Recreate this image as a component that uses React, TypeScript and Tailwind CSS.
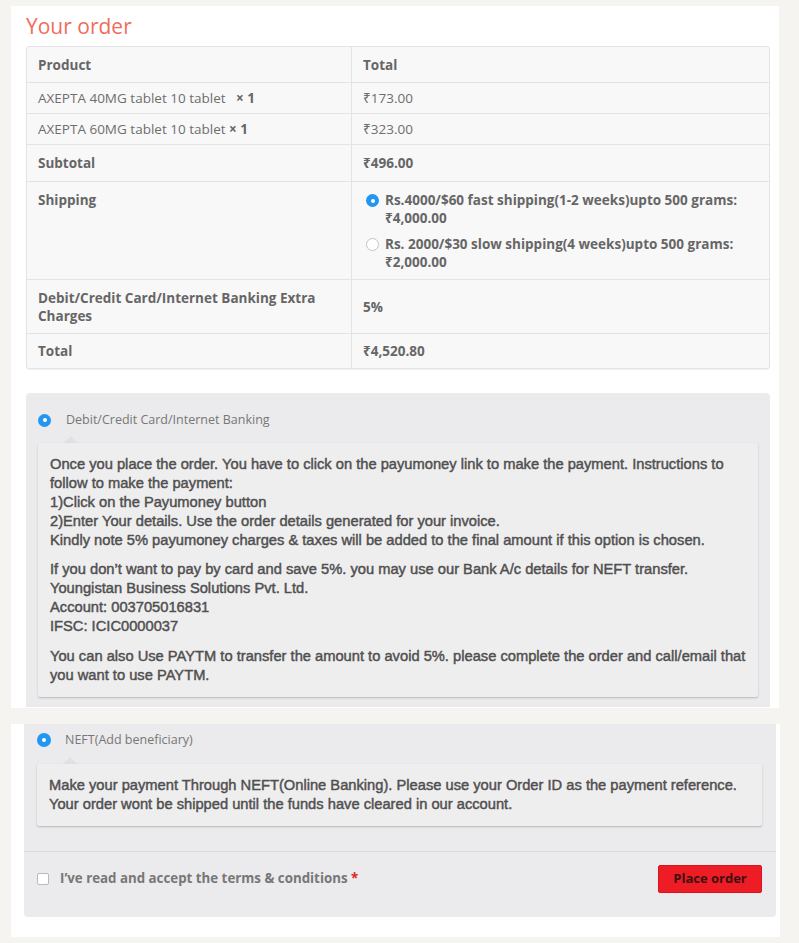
import React from "react";

const os = "font-['Open_Sans','Noto_Sans',sans-serif]";
const ls = "font-['Liberation_Sans',Arial,sans-serif]";

function Radio({ checked, size = 13 }: { checked?: boolean; size?: number }) {
  return checked ? (
    <span
      className="flex shrink-0 items-center justify-center rounded-full bg-[#2196f3]"
      style={{ width: size, height: size }}
    >
      <span className="block h-[4px] w-[4px] rounded-full bg-white" />
    </span>
  ) : (
    <span
      className="block shrink-0 rounded-full border border-[#c4c4c4] bg-white"
      style={{ width: size, height: size }}
    />
  );
}

function Row({
  h,
  left,
  right,
  first,
}: {
  h: string;
  left: React.ReactNode;
  right: React.ReactNode;
  first?: boolean;
}) {
  return (
    <div className={`grid grid-cols-[324px_1fr] ${h} ${first ? "" : "border-t border-[#e4e4e4]"}`}>
      <div className="flex items-center px-[11px]">{left}</div>
      <div className="flex items-center border-l border-[#e4e4e4] px-[11px]">{right}</div>
    </div>
  );
}

export default function App() {
  return (
    <div className={`h-[943px] w-[799px] overflow-hidden bg-[#f5f4f0] pt-[6px] ${os}`}>
      {/* Card 1 */}
      <div className="ml-[11px] h-[702px] w-[768px] overflow-hidden bg-white pl-[15px] pr-[9px]">
        <h2 className="pt-[6px] pb-[6px] text-[21px] leading-[28px] font-normal text-[#f26b5b]">Your order</h2>
        <div className="overflow-hidden rounded-[3px] border border-[#e4e4e4] bg-[#f8f8f8] text-[13.5px] leading-[18px] text-[#6e6e6e] shadow-[0_1px_1px_rgba(0,0,0,0.06)]">
          <Row first h="h-[35px]" left={<b className="text-[#666]">Product</b>} right={<b className="text-[#666]">Total</b>} />
          <Row
            h="h-[31px]"
            left={
              <span>
                AXEPTA 40MG tablet 10 tablet&nbsp;&nbsp; <b className="text-[#666]">×&nbsp;1</b>
              </span>
            }
            right={<span>₹173.00</span>}
          />
          <Row
            h="h-[31px]"
            left={
              <span>
                AXEPTA 60MG tablet 10 tablet <b className="text-[#666]">×&nbsp;1</b>
              </span>
            }
            right={<span>₹323.00</span>}
          />
          <Row h="h-[37px]" left={<b className="text-[#666]">Subtotal</b>} right={<b className="text-[#666]">₹496.00</b>} />
          <div className="grid h-[98px] grid-cols-[324px_1fr] border-t border-[#e4e4e4]">
            <div className="px-[11px] pt-[9px]">
              <b className="text-[#666]">Shipping</b>
            </div>
            <div className="flex flex-col gap-[8px] border-l border-[#e4e4e4] pt-[9px] pl-[14px] pr-[12px] font-bold text-[#666]">
              <div className="flex gap-[6px]">
                <span className="mt-[3px] flex">
                  <Radio checked />
                </span>
                <span>
                  Rs.4000/$60 fast shipping(1-2 weeks)upto 500 grams:
                  <br />
                  ₹4,000.00
                </span>
              </div>
              <div className="flex gap-[6px]">
                <span className="mt-[3px] flex">
                  <Radio />
                </span>
                <span>
                  Rs. 2000/$30 slow shipping(4 weeks)upto 500 grams:
                  <br />
                  ₹2,000.00
                </span>
              </div>
            </div>
          </div>
          <div className="grid h-[54px] grid-cols-[324px_1fr] border-t border-[#e4e4e4]">
            <div className="flex items-center px-[11px]">
              <b className="text-[#666]">
                Debit/Credit Card/Internet Banking Extra
                <br />
                Charges
              </b>
            </div>
            <div className="flex items-center border-l border-[#e4e4e4] px-[11px]">
              <b className="text-[#666]">5%</b>
            </div>
          </div>
          <Row h="h-[35px]" left={<b className="text-[#666]">Total</b>} right={<b className="text-[#666]">₹4,520.80</b>} />
        </div>

        {/* Payment panel 1 */}
        <div className="mt-[24px] rounded-t-[4px] bg-[#ebeaec] px-[12px] pt-[19px] pb-[10px]">
          <div className="flex h-[16px] items-center">
            <Radio checked />
            <span className="ml-[15px] text-[12.5px] text-[#777]">Debit/Credit Card/Internet Banking</span>
          </div>
          <div className="relative mt-[15px]">
            <span className="absolute top-[-5px] left-[28px] h-[10px] w-[10px] rotate-45 bg-[#e2e0e2]" />
            <div
              className={`relative rounded-[2px] bg-[#efeeef] px-[12px] pt-[12px] pb-[12px] text-[14.7px] leading-[19px] text-[#505050] shadow-[0_1px_2px_rgba(0,0,0,0.22)] ${ls} [-webkit-text-stroke:0.45px_#505050]`}
            >
              <p className="whitespace-nowrap">
                Once you place the order. You have to click on the payumoney link to make the payment. Instructions to
                <br />
                follow to make the payment:
                <br />
                1)Click on the Payumoney button
                <br />
                2)Enter Your details. Use the order details generated for your invoice.
                <br />
                Kindly note 5% payumoney charges &amp; taxes will be added to the final amount if this option is chosen.
              </p>
              <p className="mt-[10px] whitespace-nowrap">
                If you don’t want to pay by card and save 5%. you may use our Bank A/c details for NEFT transfer.
                <br />
                Youngistan Business Solutions Pvt. Ltd.
                <br />
                Account: 003705016831
                <br />
                IFSC: ICIC0000037
              </p>
              <p className="mt-[11px] whitespace-nowrap">
                You can also Use PAYTM to transfer the amount to avoid 5%. please complete the order and call/email that
                <br />
                you want to use PAYTM.
              </p>
            </div>
          </div>
        </div>
      </div>

      {/* Card 2 */}
      <div className="mt-[16px] ml-[11px] h-[213px] w-[769px] bg-white pl-[13px] pr-[4px]">
        <div className="rounded-b-[4px] bg-[#ebeaec]">
          <div className="px-[13px] pt-[8px] pb-[25px]">
            <div className="flex h-[16px] items-center">
              <Radio checked size={14} />
              <span className="ml-[14px] text-[12.5px] text-[#777]">NEFT(Add beneficiary)</span>
            </div>
            <div className="relative mt-[16px] mr-[1px]">
              <span className="absolute top-[-5px] left-[28px] h-[10px] w-[10px] rotate-45 bg-[#e2e0e2]" />
              <div
                className={`relative rounded-[2px] bg-[#efeeef] px-[12px] py-[12px] text-[14.7px] leading-[19px] text-[#505050] shadow-[0_1px_2px_rgba(0,0,0,0.22)] ${ls} [-webkit-text-stroke:0.45px_#505050]`}
              >
                <p className="whitespace-nowrap">
                  Make your payment Through NEFT(Online Banking). Please use your Order ID as the payment reference.
                  <br />
                  Your order wont be shipped until the funds have cleared in our account.
                </p>
              </div>
            </div>
          </div>
          <div className="flex items-center justify-between border-t border-[#d9d7da] pt-[13px] pr-[14px] pb-[24px] pl-[13px]">
            <label className="flex items-center">
              <span className="block h-[12px] w-[12px] rounded-[2px] border border-[#b9b9b9] bg-white" />
              <span className="ml-[11px] text-[13.3px] font-bold text-[#777]">
                I’ve read and accept the terms &amp; conditions <span className="text-[#e2231a]">*</span>
              </span>
            </label>
            <button className="h-[28px] w-[104px] rounded-[2px] border border-[#d8141d] bg-[#ee1c25] text-[13px] font-bold text-[#3b1111]">
              Place order
            </button>
          </div>
        </div>
      </div>
    </div>
  );
}
